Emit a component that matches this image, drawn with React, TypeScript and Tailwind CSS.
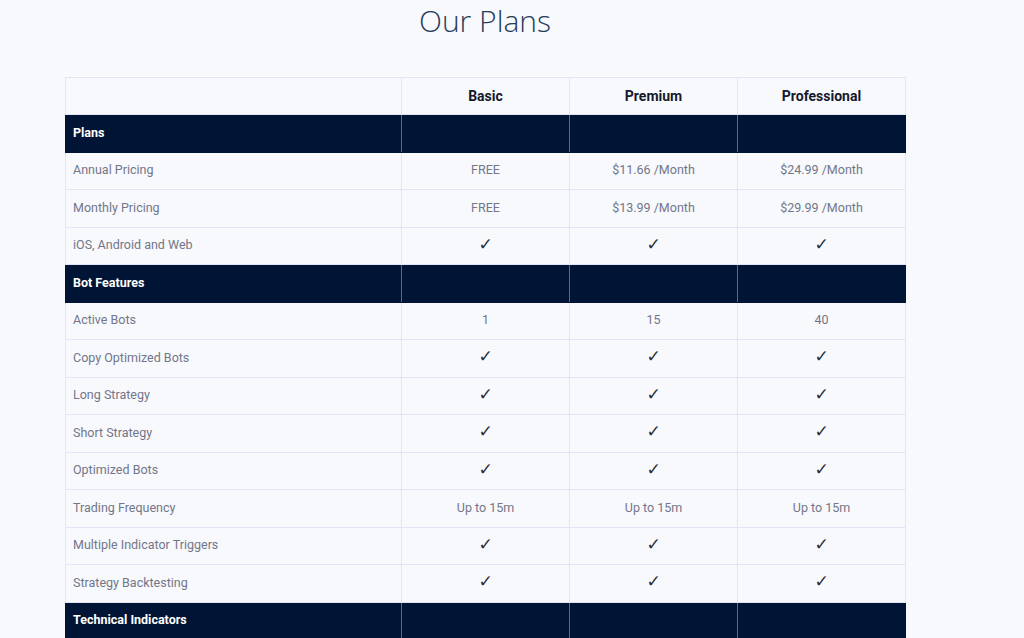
import React from 'react';

type Row =
  | { kind: 'section'; label: string }
  | { kind: 'row'; label: string; values: string[] };

const C = '✓';

const rows: Row[] = [
  { kind: 'section', label: 'Plans' },
  { kind: 'row', label: 'Annual Pricing', values: ['FREE', '$11.66 /Month', '$24.99 /Month'] },
  { kind: 'row', label: 'Monthly Pricing', values: ['FREE', '$13.99 /Month', '$29.99 /Month'] },
  { kind: 'row', label: 'iOS, Android and Web', values: [C, C, C] },
  { kind: 'section', label: 'Bot Features' },
  { kind: 'row', label: 'Active Bots', values: ['1', '15', '40'] },
  { kind: 'row', label: 'Copy Optimized Bots', values: [C, C, C] },
  { kind: 'row', label: 'Long Strategy', values: [C, C, C] },
  { kind: 'row', label: 'Short Strategy', values: [C, C, C] },
  { kind: 'row', label: 'Optimized Bots', values: [C, C, C] },
  { kind: 'row', label: 'Trading Frequency', values: ['Up to 15m', 'Up to 15m', 'Up to 15m'] },
  { kind: 'row', label: 'Multiple Indicator Triggers', values: [C, C, C] },
  { kind: 'row', label: 'Strategy Backtesting', values: [C, C, C] },
  { kind: 'section', label: 'Technical Indicators' },
];

const plans = ['Basic', 'Premium', 'Professional'];

function Cell({ v }: { v: string }) {
  if (v === C) {
    return (
      <span className="text-[17px] leading-none font-bold text-[#2b2e38] font-['DejaVu_Sans',sans-serif]">✓</span>
    );
  }
  return <span>{v}</span>;
}

export default function App() {
  return (
    <div className="h-[638px] overflow-hidden bg-[#f8f9fc] font-['Roboto',sans-serif]">
      <div className="ml-[65px] w-[840px]">
        <h1 className="h-[77px] pt-[2px] text-center text-[30px] leading-[38px] font-light text-[#263d5c] font-['Open_Sans',sans-serif]">
          Our Plans
        </h1>
        <table className="w-full border-collapse table-fixed">
          <colgroup>
            <col className="w-[336px]" />
            <col className="w-[168px]" />
            <col className="w-[168px]" />
            <col className="w-[168px]" />
          </colgroup>
          <thead>
            <tr className="h-[37px]">
              <th className="border border-[#e4e4f7]" />
              {plans.map((p) => (
                <th key={p} className="border border-[#e4e4f7] text-center text-[14px] font-bold text-[#141a2e]">
                  {p}
                </th>
              ))}
            </tr>
          </thead>
          <tbody>
            {rows.map((r, i) =>
              r.kind === 'section' ? (
                <tr key={i} className="h-[37.5px] bg-[#001535]">
                  <td className="border border-[#001535] border-r-[#5d6888] pl-[7px] text-left text-[12.5px] font-bold text-white">
                    {r.label}
                  </td>
                  <td className="border border-[#001535] border-x-[#5d6888]" />
                  <td className="border border-[#001535] border-x-[#5d6888]" />
                  <td className="border border-[#001535] border-l-[#5d6888]" />
                </tr>
              ) : (
                <tr key={i} className="h-[37.5px]">
                  <td className="border border-[#e4e4f7] pl-[7px] text-left text-[12.5px] text-[#72768a]">{r.label}</td>
                  {r.values.map((v, j) => (
                    <td key={j} className="border border-[#e4e4f7] text-center text-[12.5px] text-[#72768a]">
                      <Cell v={v} />
                    </td>
                  ))}
                </tr>
              )
            )}
          </tbody>
        </table>
      </div>
    </div>
  );
}
